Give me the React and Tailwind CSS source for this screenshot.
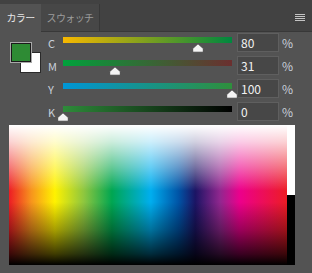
import React from 'react';

const rows = [
  { label: 'C', value: 80, bar: 'bg-[linear-gradient(to_right,#f7b800,#00873f)]' },
  { label: 'M', value: 31, bar: 'bg-[linear-gradient(to_right,#00a23c,#6b2f2f)]' },
  { label: 'Y', value: 100, bar: 'bg-[linear-gradient(to_right,#0096d6,#2f8f3c)]' },
  { label: 'K', value: 0, bar: 'bg-[linear-gradient(to_right,#2e8b3a,#000000)]' },
];

// small white slider thumb, points up
function Thumb({ value }) {
  return (
    <div className="absolute top-[10px] -translate-x-1/2" style={{ left: `${value}%` }}>
      <svg width="13" height="10" viewBox="0 0 13 10">
        <path d="M6.5 0.8 L11.8 5.6 V9.2 H1.2 V5.6 Z" fill="#f4f4f4" stroke="#3c3c3c" strokeWidth="0.8" strokeLinejoin="round" />
      </svg>
    </div>
  );
}

function SliderRow({ label, value, bar }) {
  return (
    <div className="flex h-[23px] items-start">
      <div className="w-[15px] h-[20px] flex items-center text-[11px] text-[#c9d0da] leading-none">{label}</div>
      <div className="relative w-[169px] h-[20px]">
        <div className={`absolute left-0 right-0 top-[4px] h-[6px] ${bar}`} />
        <Thumb value={value} />
      </div>
      <div className="ml-[5px] w-[42px] h-[19px] border border-[#5f5f5f] bg-[#474747] flex items-center pl-[3px] text-[12px] text-[#f2f2f2] leading-none">
        {value}
      </div>
      <div className="ml-[3px] h-[20px] flex items-center text-[12px] text-[#c9d0da] leading-none">%</div>
    </div>
  );
}

export default function App() {
  return (
    <div className="w-[312px] h-[273px] bg-[#535353] font-['Noto_Sans_CJK_JP','Liberation_Sans',sans-serif] select-none overflow-hidden">
      {/* tab bar */}
      <div className="h-[32px] bg-[#424242] flex items-end relative">
        <div className="absolute left-0 right-0 bottom-0 h-px bg-[#383838]" />
        <div className="relative z-10 w-[41px] h-[28px] bg-[#535353] flex items-center justify-center text-[10px] tracking-[-0.6px] text-[#e6e6e6] pb-[2px] whitespace-nowrap">
          カラー
        </div>
        <div className="w-[59px] h-[28px] bg-[#474747] border-r border-[#383838] flex items-center justify-center text-[10px] tracking-[-0.6px] text-[#9c9c9c] pb-[2px] whitespace-nowrap">
          スウォッチ
        </div>
        <div className="flex-1" />
        <div className="flex flex-col gap-px mr-[7px] mb-[11px]">
          <div className="w-[10px] h-px bg-[#c4c4c4]" />
          <div className="w-[10px] h-px bg-[#c4c4c4]" />
          <div className="w-[10px] h-px bg-[#c4c4c4]" />
          <div className="w-[10px] h-px bg-[#c4c4c4]" />
        </div>
      </div>

      {/* swatches + sliders */}
      <div className="flex pt-px">
        <div className="w-[48px] relative">
          <div className="absolute left-[20px] top-[19px] w-[21px] h-[21px] bg-white border border-[#2a2a2a]" />
          <div className="absolute left-[10px] top-[9px] w-[22px] h-[21px] border border-[#a8a8a8] bg-[#1a1a1a] p-px">
            <div className="w-full h-full bg-[#2e8b34]" />
          </div>
        </div>
        <div className="flex flex-col">
          {rows.map((r) => (
            <SliderRow key={r.label} {...r} />
          ))}
        </div>
      </div>

      {/* spectrum */}
      <div className="flex mx-[9px] mt-0 h-[140px] w-[286px]">
        <div className="relative flex-1 bg-[linear-gradient(to_right,#ed1c24_0%,#f7941d_8%,#fff200_16.5%,#8dc63f_27%,#00a651_37%,#00aeef_51%,#0054a6_61%,#1b1464_67%,#92278f_76%,#ec008c_83%,#ed1c24_100%)]">
          <div className="absolute inset-0 bg-[linear-gradient(to_bottom,#ffffff_0%,rgba(255,255,255,0.8)_12%,rgba(255,255,255,0.4)_30%,rgba(255,255,255,0)_47%,rgba(0,0,0,0)_55%,rgba(0,0,0,0.35)_75%,rgba(0,0,0,0.75)_92%,#000000_100%)]" />
        </div>
        <div className="w-[8px] flex flex-col">
          <div className="h-[70px] bg-white" />
          <div className="flex-1 bg-black" />
        </div>
      </div>
    </div>
  );
}
